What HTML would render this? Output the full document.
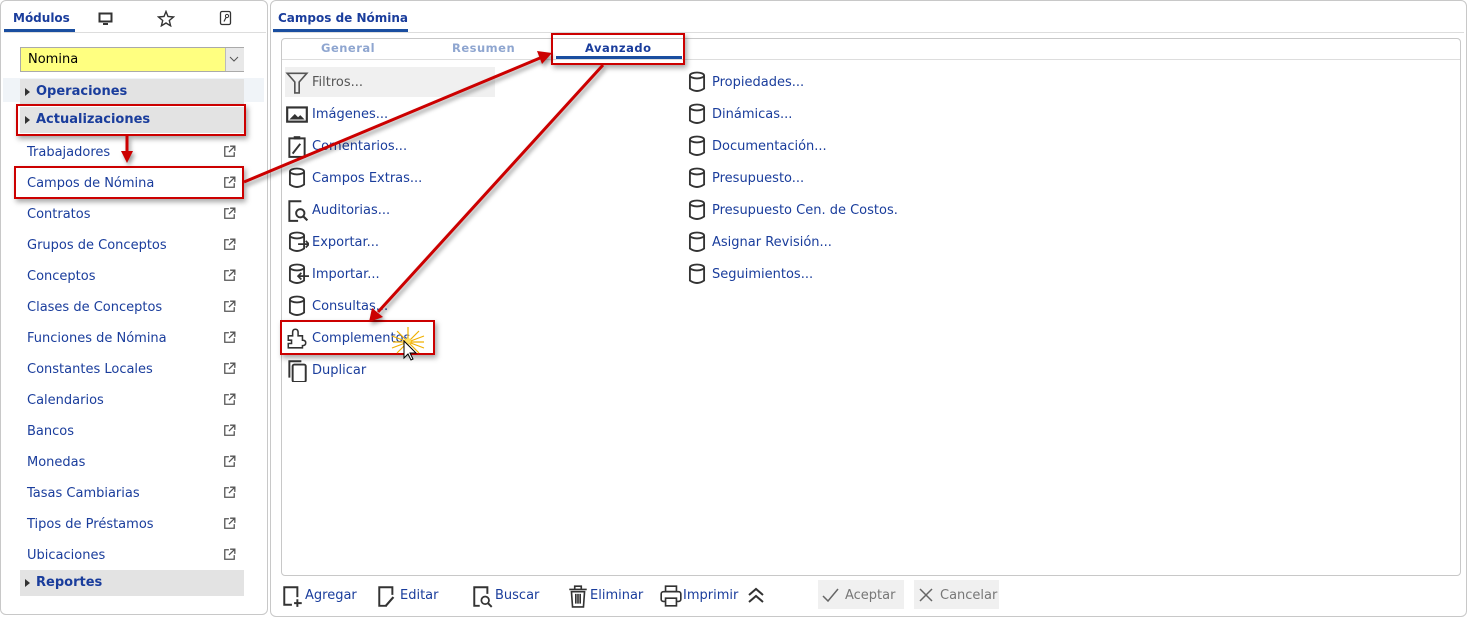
<!DOCTYPE html>
<html><head><meta charset="utf-8"><style>
body{margin:0;width:1469px;height:617px;background:#fff;font-family:"DejaVu Sans","Liberation Sans",sans-serif;position:relative;overflow:hidden;color:#1a3d9c}
.abs{position:absolute}
.lp{left:0;top:0;width:268px;height:615px;border:1px solid #c8c8c8;border-radius:6px;background:#fff;box-sizing:border-box}
.rp{left:270px;top:0;width:1197px;height:617px;border:1px solid #c8c8c8;border-radius:6px;box-sizing:border-box}
.t{font-size:12px;white-space:nowrap}
.side{left:27px;font-size:13px;color:#1a3d9c;white-space:nowrap}
.ext{left:223px;width:13px;height:13px}
.grp{left:20px;width:224px;height:26px;background:#e3e3e3;font-weight:bold;font-size:13px;line-height:26px;box-sizing:border-box;padding-left:16px;color:#1a3d9c}
.grp:before{content:"";position:absolute;left:5px;top:9px;border-left:5px solid #333;border-top:4px solid transparent;border-bottom:4px solid transparent}
.it{font-size:13px;color:#1a3d9c;white-space:nowrap}
.ic{width:24px;height:24px}
.redbox{border:2px solid #c00;box-sizing:border-box;box-shadow:2px 3px 5px rgba(0,0,0,.35)}
.btn{font-size:13px;color:#1a3d9c;white-space:nowrap}
</style></head><body>
<div class="abs lp"></div>
<div class="abs rp"></div>
<div class="abs t" style="left:13px;top:11px;font-weight:bold;font-size:12px;color:#1a3d9c">Módulos</div>
<div class="abs" style="left:4px;top:29px;width:71px;height:3px;background:#1a4ea0"></div>
<div class="abs" style="left:4px;top:32px;width:262px;height:1px;background:#ddd"></div>
<svg class="abs" style="left:98px;top:12px" width="16" height="14"><rect x="1.5" y="1.5" width="12" height="8" fill="none" stroke="#333" stroke-width="2"/><rect x="5" y="11" width="5" height="2" fill="#333"/></svg>
<svg class="abs" style="left:157px;top:10px" width="18" height="17"><path d="M9 1.5 L11 6.5 16.5 7 12.3 10.5 13.6 15.8 9 13 4.4 15.8 5.7 10.5 1.5 7 7 6.5Z" fill="none" stroke="#333" stroke-width="1.4"/></svg>
<svg class="abs" style="left:219px;top:10px" width="14" height="17"><rect x="1.5" y="1.5" width="10" height="13" rx="1.5" fill="none" stroke="#333" stroke-width="1.3"/><circle cx="8" cy="6" r="1.6" fill="none" stroke="#333"/><path d="M7 7.5 L5 11.5" stroke="#333" stroke-width="1.2"/></svg>
<div class="abs" style="left:20px;top:47px;width:224px;height:25px;border:1px solid #aaa;background:#ffff80;box-sizing:border-box"></div>
<div class="abs t" style="left:28px;top:52px;font-size:13px;color:#000">Nomina</div>
<div class="abs" style="left:225px;top:48px;width:18px;height:23px;background:#e8e8e8;border-left:1px solid #bbb"></div>
<svg class="abs" style="left:229px;top:56px" width="10" height="7"><path d="M1 1 L5 5 9 1" fill="none" stroke="#555"/></svg>
<div class="abs" style="left:3px;top:78px;width:261px;height:24px;background:#f0f4f8"></div>
<div class="abs grp" style="top:79px">Operaciones</div>
<div class="abs grp" style="top:107px">Actualizaciones</div>
<div class="abs grp" style="top:570px">Reportes</div>
<div class="abs redbox" style="left:16px;top:104px;width:230px;height:32px"></div>
<div class="abs redbox" style="left:14px;top:166px;width:230px;height:33px"></div>
<div id="side"></div>
<div class="abs t" style="left:278px;top:11px;font-weight:bold;font-size:12px;color:#1a3d9c">Campos de Nómina</div>
<div class="abs" style="left:273px;top:29px;width:135px;height:3px;background:#1a4ea0"></div>
<div class="abs" style="left:273px;top:32px;width:1191px;height:1px;background:#ddd"></div>
<div class="abs" style="left:281px;top:38px;width:1180px;height:538px;border:1px solid #c8c8c8;border-radius:4px;box-sizing:border-box"></div>
<div class="abs" style="left:282px;top:59px;width:1178px;height:1px;background:#ddd"></div>
<div class="abs t" style="left:321px;top:41px;font-weight:bold;font-size:11.5px;color:#8fa6d0;letter-spacing:.5px">General</div>
<div class="abs t" style="left:452px;top:41px;font-weight:bold;font-size:11.5px;color:#8fa6d0;letter-spacing:.5px">Resumen</div>
<div class="abs t" style="left:585px;top:41px;font-weight:bold;font-size:11.5px;color:#1a3d9c;letter-spacing:.5px">Avanzado</div>
<div class="abs" style="left:556px;top:56px;width:126px;height:3px;background:#1a4ea0"></div>
<div class="abs redbox" style="left:551px;top:33px;width:134px;height:32px"></div>
<div class="abs" style="left:285px;top:67px;width:210px;height:30px;background:#f0f0f0"></div>
<div id="items"></div>
<div class="abs redbox" style="left:280px;top:320px;width:155px;height:35px"></div>
<svg class="abs" style="left:388px;top:322px" width="40" height="40"><g stroke="#f0b000" stroke-width="1.2"><path d="M5 20H36M20 5V33M9 9L31 31M31 9L9 31M4 14L36 26M4 26L36 14"/></g><circle cx="20" cy="19" r="3" fill="#ffe060"/><path d="M16 19 L16 36 20 32 23 38 25 37 22 31 28 31Z" fill="#fff" stroke="#000" stroke-width="1"/></svg>
<div id="btns"></div>
<div class="abs" style="left:818px;top:580px;width:86px;height:29px;background:#f0f0f0"></div>
<div class="abs" style="left:914px;top:580px;width:85px;height:29px;background:#f0f0f0"></div>
<svg class="abs" style="left:822px;top:587px" width="18" height="16"><path d="M1 9 L6 14 16 2" fill="none" stroke="#666" stroke-width="1.5"/></svg>
<div class="abs btn" style="left:845px;top:588px;color:#777">Aceptar</div>
<svg class="abs" style="left:918px;top:587px" width="16" height="16"><path d="M2 2L14 14M14 2L2 14" stroke="#666" stroke-width="1.5"/></svg>
<div class="abs btn" style="left:940px;top:588px;color:#777">Cancelar</div>
<svg class="abs" style="left:0;top:0;filter:drop-shadow(2px 3px 2px rgba(0,0,0,.4))" width="1469" height="617">
<g stroke="#c00" stroke-width="3" fill="#c00">
<line x1="127" y1="136" x2="127" y2="152"/><path d="M121 151 L133 151 127 163Z" stroke="none"/>
<line x1="244" y1="182" x2="540" y2="58"/><path d="M552 53 L537 51 542 64Z" stroke="none"/>
<line x1="603" y1="65" x2="378" y2="312"/><path d="M369 322 L372 308 383 317Z" stroke="none"/>
</g></svg>
<script>
var s=["Trabajadores","Campos de Nómina","Contratos","Grupos de Conceptos","Conceptos","Clases de Conceptos","Funciones de Nómina","Constantes Locales","Calendarios","Bancos","Monedas","Tasas Cambiarias","Tipos de Préstamos","Ubicaciones"];
var h="";s.forEach(function(t,i){var y=145+i*31;h+='<div class="abs side" style="top:'+y+'px">'+t+'</div><svg class="abs ext" style="top:'+(y+0)+'px" viewBox="0 0 11 11"><path d="M5 1.5H1.5V9.5H9.5V6M6 1H10V5M10 1L5 6" fill="none" stroke="#555" stroke-width="1.1"/></svg>';});
document.getElementById("side").innerHTML=h;
var cyl='<ellipse cx="11" cy="5" rx="6.5" ry="2.7" fill="none" stroke="#333" stroke-width="1.7"/><path d="M4.5 5V17Q11 21.5 17.5 17V5" fill="none" stroke="#333" stroke-width="1.7"/>';
var L=[["Filtros...",'<path d="M2 3H20L13 11V21H9V11Z" fill="none" stroke="#555" stroke-width="1.5"/>',"#555"],["Imágenes...",'<rect x="2" y="5" width="18" height="13" fill="none" stroke="#333" stroke-width="2"/><path d="M4 16L9 11 12 14 14 12 18 16Z" fill="#333"/>'],["Comentarios...",'<rect x="4" y="4" width="14" height="17" fill="none" stroke="#333" stroke-width="1.8"/><rect x="8" y="2" width="6" height="3" fill="#333"/><path d="M7 18L14 9" stroke="#333" stroke-width="1.8"/>'],["Campos Extras...",cyl],["Auditorias...",'<path d="M15 3H4V21H12" fill="none" stroke="#333" stroke-width="1.8"/><circle cx="14" cy="14" r="3.8" fill="none" stroke="#333" stroke-width="1.8"/><path d="M16.7 16.7L20.5 20.5" stroke="#333" stroke-width="2"/>'],["Exportar...",cyl+'<path d="M12 13H22M19 10L22 13 19 16" fill="none" stroke="#333" stroke-width="1.6"/>'],["Importar...",cyl+'<path d="M22 13H12M15 10L12 13 15 16" fill="none" stroke="#333" stroke-width="1.6"/>'],["Consultas...",cyl],["Complementos",'<path d="M3 9H7V6Q7 3 9.5 3Q12 3 12 6V9H16V13Q19 13 19 15.5Q19 18 16 18V20H3V16H6V13H3Z" fill="none" stroke="#333" stroke-width="1.4"/>'],["Duplicar",'<path d="M4 18V3H15" fill="none" stroke="#333" stroke-width="1.8"/><rect x="7" y="6" width="12" height="16" rx="1.5" fill="none" stroke="#333" stroke-width="1.8"/>']];
var R=["Propiedades...","Dinámicas...","Documentación...","Presupuesto...","Presupuesto Cen. de Costos.","Asignar Revisión...","Seguimientos..."];
h="";L.forEach(function(a,i){var y=70+i*32;h+='<svg class="abs ic" style="left:285px;top:'+y+'px" viewBox="0 0 22 22">'+a[1]+'</svg><div class="abs it" style="left:312px;top:'+(y+5)+'px;color:'+(a[2]||"#1a3d9c")+'">'+a[0]+'</div>';});
R.forEach(function(t,i){var y=70+i*32;h+='<svg class="abs ic" style="left:685px;top:'+y+'px" viewBox="0 0 22 22">'+cyl+'</svg><div class="abs it" style="left:712px;top:'+(y+5)+'px">'+t+'</div>';});
document.getElementById("items").innerHTML=h;
var B=[[281,"Agregar",'<path d="M10 19H3V3H15V12" fill="none" stroke="#333" stroke-width="1.8"/><path d="M15 14V21M12 17.5H19" stroke="#333" stroke-width="1.8"/>'],[376,"Editar",'<path d="M10 20H3V3H15V10" fill="none" stroke="#333" stroke-width="1.8"/><path d="M9 20L16 12" stroke="#333" stroke-width="2"/>'],[471,"Buscar",'<path d="M8 20H3V3H15V9" fill="none" stroke="#333" stroke-width="1.8"/><circle cx="13" cy="15" r="3.5" fill="none" stroke="#333" stroke-width="1.6"/><path d="M15.5 17.5L19 21" stroke="#333" stroke-width="1.8"/>'],[566,"Eliminar",'<path d="M3 5H19M8 5V2H14V5M5 7H17L16 21H6Z M9 9V18M11 9V18M13 9V18" fill="none" stroke="#333" stroke-width="1.5"/>'],[659,"Imprimir",'<rect x="6" y="2" width="10" height="5" fill="none" stroke="#333" stroke-width="1.5"/><rect x="2" y="7" width="18" height="9" rx="2" fill="none" stroke="#333" stroke-width="1.5"/><rect x="6" y="13" width="10" height="7" fill="#fff" stroke="#333" stroke-width="1.5"/>']];
h="";B.forEach(function(b){h+='<svg class="abs ic" style="left:'+b[0]+'px;top:584px" viewBox="0 0 22 22">'+b[2]+'</svg><div class="abs btn" style="left:'+(b[0]+24)+'px;top:588px">'+b[1]+'</div>';});
h+='<svg class="abs" style="left:746px;top:586px" width="20" height="18"><path d="M3 9L10 3 17 9M3 16L10 10 17 16" fill="none" stroke="#333" stroke-width="2"/></svg>';
document.getElementById("btns").innerHTML=h;
</script>
</body></html>
